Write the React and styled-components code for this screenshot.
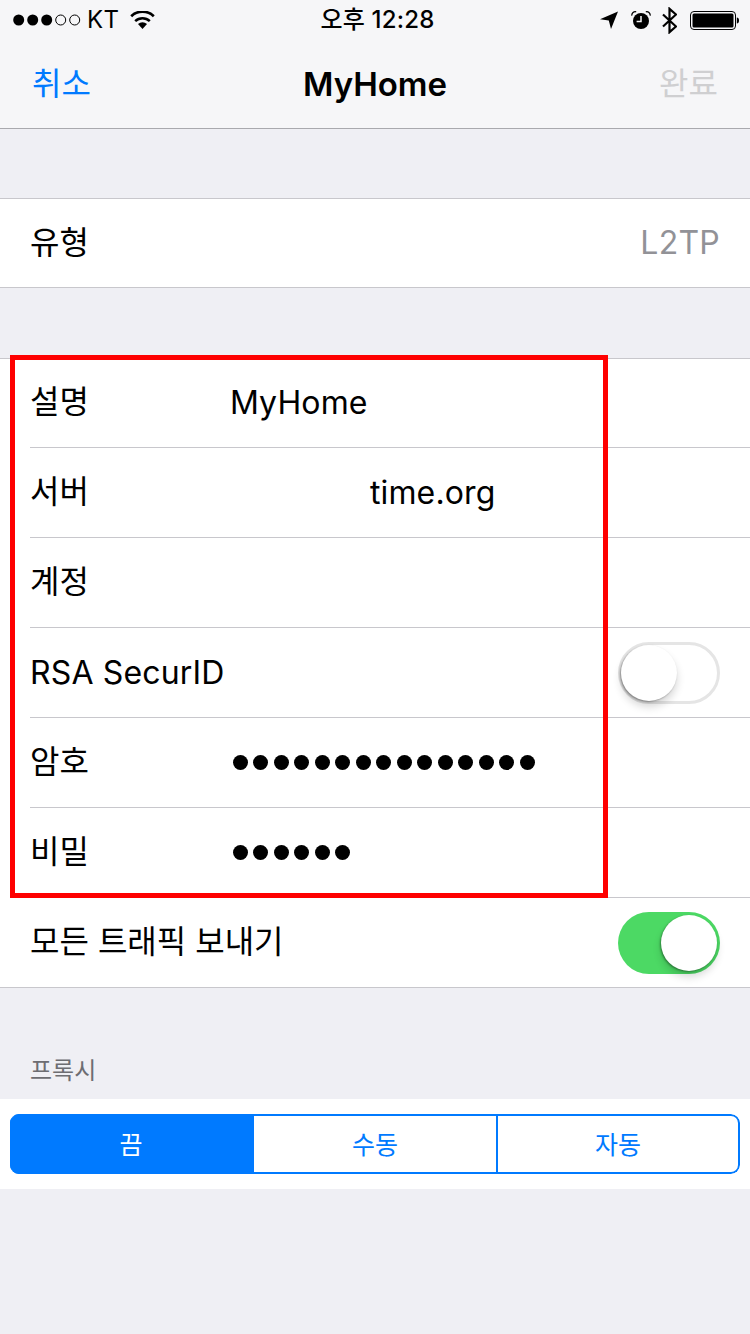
import React from "react";
import styled, { createGlobalStyle } from "styled-components";

const Global = createGlobalStyle`
  html, body { margin: 0; padding: 0; background: #efeff4; }
  body { font-family: Inter, "Noto Sans CJK KR", sans-serif; color: #000; }
  * { box-sizing: border-box; }
`;

const Page = styled.div`
  position: relative;
  width: 750px;
  height: 1334px;
  overflow: hidden;
  background: #efeff4;
`;

const Header = styled.header`
  height: 129px;
  background: #f6f6f8;
  border-bottom: 1px solid #a9a9ae;
  display: flex;
  flex-direction: column;
`;

const StatusBar = styled.div`
  height: 40px;
  padding: 0 11px 0 13px;
  display: grid;
  grid-template-columns: 1fr auto 1fr;
  align-items: center;
`;

const StatusLeft = styled.div`
  display: flex;
  align-items: center;
`;

const StatusRight = styled.div`
  display: flex;
  align-items: center;
  justify-content: flex-end;
`;

const Carrier = styled.span`
  margin-left: 6px;
  margin-right: 11px;
  font-size: 24px;
  letter-spacing: 0.3px;
  line-height: 40px;
`;

const Clock = styled.span`
  margin-left: 3px;
  font-size: 24px;
  font-weight: 500;
  line-height: 40px;
  letter-spacing: 0.2px;
`;

const Icon = styled.svg`
  display: block;
  flex: none;
  margin-left: ${(p) => p.$gap || 0}px;
`;

const NavBar = styled.nav`
  flex: 1;
  padding: 0 32px;
  display: grid;
  grid-template-columns: 1fr auto 1fr;
  align-items: center;
`;

const NavAction = styled.span`
  font-size: 32px;
  line-height: 40px;
  color: ${(p) => (p.$disabled ? "#cfcfd1" : "#007aff")};
  text-align: ${(p) => (p.$right ? "right" : "left")};
`;

const NavTitle = styled.h1`
  margin: 0;
  font-size: 33px;
  font-weight: 600;
  line-height: 40px;
`;

const Group = styled.section`
  margin-top: ${(p) => p.$top}px;
  background: #fff;
  border-top: 1px solid #c8c7cc;
  border-bottom: 1px solid #c8c7cc;
`;

const Row = styled.div`
  position: relative;
  height: ${(p) => p.$height || 90}px;
  margin-left: 30px;
  padding-right: 30px;
  display: flex;
  align-items: center;
  border-bottom: ${(p) => (p.$last ? "none" : "1px solid #c8c7cc")};
`;

const Label = styled.span`
  font-size: 32px;
  line-height: 40px;
  white-space: nowrap;
  letter-spacing: ${(p) => (p.$latin ? "0.15px" : "0")};
  padding-bottom: ${(p) => (p.$latin || p.$level ? "0" : "2px")};
`;

const Value = styled.span`
  font-size: 32px;
  line-height: 40px;
  letter-spacing: 0.15px;
  margin-left: ${(p) => p.$indent}px;
`;

const Detail = styled.span`
  margin-left: auto;
  font-size: 32px;
  line-height: 40px;
  letter-spacing: 0.25px;
  color: #929297;
`;

const Dots = styled.span`
  display: flex;
  gap: 5.5px;
  margin-left: ${(p) => p.$indent}px;
`;

const Dot = styled.i`
  display: block;
  width: 15px;
  height: 15px;
  border-radius: 50%;
  background: #000;
`;

const Toggle = styled.div`
  position: relative;
  margin-left: auto;
  width: 102px;
  height: 62px;
  border-radius: 31px;
  background: ${(p) => (p.$on ? "#4cd964" : "#fff")};
  border: ${(p) => (p.$on ? "none" : "3px solid #e5e5e5")};
`;

const Knob = styled.div`
  position: absolute;
  top: ${(p) => (p.$on ? 3 : 0)}px;
  ${(p) => (p.$on ? "right: 3px;" : "left: 0;")}
  width: 56px;
  height: 56px;
  border-radius: 50%;
  background: #fff;
  box-shadow: -1px 1px 2px rgba(0, 0, 0, 0.35), 0 6px 9px rgba(0, 0, 0, 0.16);
`;

const SectionLabel = styled.div`
  height: 111px;
  padding: 65px 30px 0;
  font-size: 24px;
  line-height: 36px;
  color: #6d6d72;
`;

const SegmentPanel = styled.section`
  height: 90px;
  background: #fff;
  padding: 15px 10px;
`;

const Segments = styled.div`
  height: 60px;
  display: grid;
  grid-template-columns: 244px 244px 242px;
  border-radius: 9px;
  overflow: hidden;
`;

const Segment = styled.div`
  display: flex;
  align-items: center;
  justify-content: center;
  padding-bottom: 2px;
  font-size: 25px;
  background: ${(p) => (p.$active ? "#007aff" : "#fff")};
  color: ${(p) => (p.$active ? "#fff" : "#007aff")};
  border: 2px solid #007aff;
  border-left: none;
  &:first-child {
    border-left: 2px solid #007aff;
    border-right: none;
    padding-right: 4px;
  }
  &:last-child {
    border-radius: 0 9px 9px 0;
  }
`;

const Highlight = styled.div`
  position: absolute;
  left: 10px;
  top: 355px;
  width: 598px;
  height: 543px;
  border: 5px solid #fe0000;
  pointer-events: none;
`;

const Signal = () => (
  <Icon width="68" height="14" viewBox="0 0 68 14">
    {[0, 1, 2, 3, 4].map((i) => (
      <circle
        key={i}
        cx={5.7 + i * 14}
        cy="7"
        r={i < 3 ? 5.5 : 5}
        fill={i < 3 ? "#000" : "none"}
        stroke="#000"
        strokeWidth={i < 3 ? 0 : 1}
      />
    ))}
  </Icon>
);

const Wifi = () => (
  <Icon width="25" height="18" viewBox="0 0 25 18">
    <path d="M12.5 18L8 13a6.6 6.6 0 0 1 9 0z" fill="#000" />
    <path d="M5.2 10.2a10.6 10.6 0 0 1 14.6 0" fill="none" stroke="#000" strokeWidth="2.5" />
    <path d="M1.2 5.2a16.4 16.4 0 0 1 22.6 0" fill="none" stroke="#000" strokeWidth="2.7" />
  </Icon>
);

const Arrow = () => (
  <Icon width="18" height="18" viewBox="0 0 18 18">
    <path d="M18 0.5L0 8.2l8.8 1.2L11 18z" fill="#000" />
  </Icon>
);

const Alarm = () => (
  <Icon $gap={13} width="20" height="18" viewBox="0 0 20 18">
    <circle cx="10" cy="10" r="8" fill="#000" />
    <path d="M10 5v5.6H5.6" fill="none" stroke="#f6f6f8" strokeWidth="1.5" />
    <path d="M0.8 4.6C0.6 2 2.8 0.2 5.2 0.8M19.2 4.6C19.4 2 17.2 0.2 14.8 0.8" fill="none" stroke="#000" strokeWidth="1.3" />
  </Icon>
);

const Bluetooth = () => (
  <Icon $gap={11} width="15" height="27" viewBox="0 0 15 27">
    <path d="M1 7.5l13 12L7.5 25.2V1.8L14 7.5 1 19.5" fill="none" stroke="#000" strokeWidth="2.2" />
  </Icon>
);

const Battery = () => (
  <Icon $gap={13} width="49" height="19" viewBox="0 0 49 19">
    <rect x="0.5" y="0.5" width="45" height="18" rx="3.5" fill="none" stroke="#000" />
    <rect x="2.5" y="2.5" width="41" height="14" rx="1.5" fill="#000" />
    <path d="M46.8 6.5c1.4 0 2.2 1 2.2 3s-.8 3-2.2 3z" fill="#000" />
  </Icon>
);

const DotRun = ({ count, indent }) => (
  <Dots $indent={indent}>
    {Array.from({ length: count }, (_, i) => (
      <Dot key={i} />
    ))}
  </Dots>
);

export default function App() {
  return (
    <Page>
      <Global />
      <Header>
        <StatusBar>
          <StatusLeft>
            <Signal />
            <Carrier>KT</Carrier>
            <Wifi />
          </StatusLeft>
          <Clock>오후 12:28</Clock>
          <StatusRight>
            <Arrow />
            <Alarm />
            <Bluetooth />
            <Battery />
          </StatusRight>
        </StatusBar>
        <NavBar>
          <NavAction>취소</NavAction>
          <NavTitle>MyHome</NavTitle>
          <NavAction $disabled $right>완료</NavAction>
        </NavBar>
      </Header>

      <Group $top={69}>
        <Row $last $height={88}>
          <Label $level>유형</Label>
          <Detail>L2TP</Detail>
        </Row>
      </Group>

      <Group $top={70}>
        <Row $height={89}>
          <Label>설명</Label>
          <Value $indent={141}>MyHome</Value>
        </Row>
        <Row>
          <Label>서버</Label>
          <Value $indent={281}>time.org</Value>
        </Row>
        <Row>
          <Label>계정</Label>
        </Row>
        <Row>
          <Label $latin>RSA SecurID</Label>
          <Toggle>
            <Knob />
          </Toggle>
        </Row>
        <Row>
          <Label>암호</Label>
          <DotRun count={15} indent={144} />
        </Row>
        <Row>
          <Label>비밀</Label>
          <DotRun count={6} indent={144} />
        </Row>
        <Row $last $height={89}>
          <Label>모든 트래픽 보내기</Label>
          <Toggle $on>
            <Knob $on />
          </Toggle>
        </Row>
      </Group>

      <SectionLabel>프록시</SectionLabel>
      <SegmentPanel>
        <Segments>
          <Segment $active>끔</Segment>
          <Segment>수동</Segment>
          <Segment>자동</Segment>
        </Segments>
      </SegmentPanel>

      <Highlight />
    </Page>
  );
}
